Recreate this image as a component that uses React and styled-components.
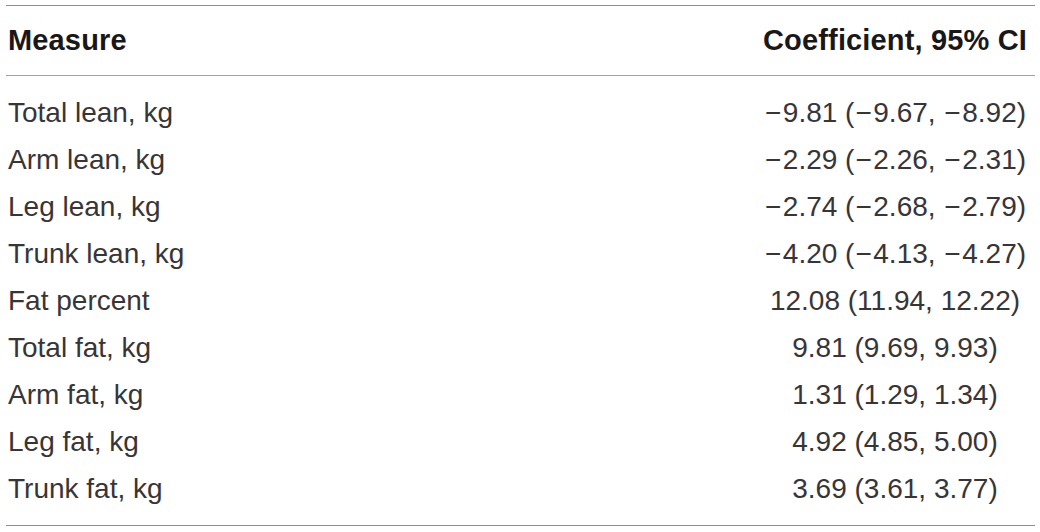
import React from 'react';
import styled, { createGlobalStyle } from 'styled-components';

const GlobalStyle = createGlobalStyle`
	html, body { margin: 0; padding: 0; background: #ffffff; }
	body { font-family: "Liberation Sans", Arial, sans-serif; color: #231f20; }
`;

const Table = styled.div`
	margin: 5px 5px 0 6px;
	width: 1029px;
	border-top: 1.5px solid #8f8f8f;
	border-bottom: 1.5px solid #8f8f8f;
`;

const HeadRow = styled.div`
	display: grid;
	grid-template-columns: 1fr 280px;
	align-items: center;
	height: 69px;
	border-bottom: 1.5px solid #a0a0a0;
	font-size: 29px;
	font-weight: 700;
	color: #1a1718;
	letter-spacing: 0.15px;
`;

const Body = styled.div`
	padding: 13px 0 13px;
`;

const Row = styled.div`
	display: grid;
	grid-template-columns: 1fr 280px;
	align-items: center;
	height: 47px;
	font-size: 28px;
	color: #383536;
`;

const Label = styled.div`
	padding-left: 2px;
	white-space: nowrap;
`;

const Value = styled.div`
	text-align: center;
	white-space: nowrap;
`;

// the minus in the source is a touch wider than Liberation's
const Minus = styled.span`
	padding: 0 1.5px 0 1px;
`;

const rows = [
	['Total lean, kg', '−9.81 (−9.67, −8.92)'],
	['Arm lean, kg', '−2.29 (−2.26, −2.31)'],
	['Leg lean, kg', '−2.74 (−2.68, −2.79)'],
	['Trunk lean, kg', '−4.20 (−4.13, −4.27)'],
	['Fat percent', '12.08 (11.94, 12.22)'],
	['Total fat, kg', '9.81 (9.69, 9.93)'],
	['Arm fat, kg', '1.31 (1.29, 1.34)'],
	['Leg fat, kg', '4.92 (4.85, 5.00)'],
	['Trunk fat, kg', '3.69 (3.61, 3.77)'],
];

function renderValue(text) {
	return text.split('−').map((part, i) => (
		<React.Fragment key={i}>
			{i > 0 && <Minus>−</Minus>}
			{part}
		</React.Fragment>
	));
}

export default function App() {
	return (
		<>
			<GlobalStyle />
			<Table>
				<HeadRow>
					<Label>Measure</Label>
					<Value>Coefficient, 95% CI</Value>
				</HeadRow>
				<Body>
					{rows.map(([label, value]) => (
						<Row key={label}>
							<Label>{label}</Label>
							<Value>{renderValue(value)}</Value>
						</Row>
					))}
				</Body>
			</Table>
		</>
	);
}
